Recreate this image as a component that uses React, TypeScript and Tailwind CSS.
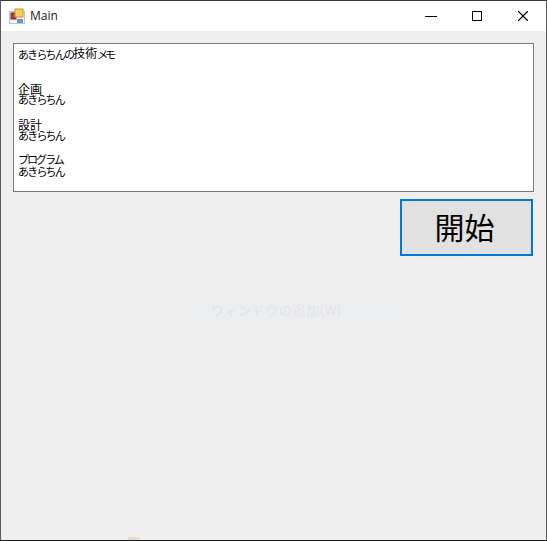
import { X } from 'lucide-react';

type Seg = { text: string; className: string };

const kana = 'text-[11px] tracking-[-1.8px]';
const kanji = 'text-xs tracking-normal align-[1px]';
const narrow = 'text-[11px] tracking-[-3.2px]';

const signature: Seg[] = [{ text: 'あきらちん', className: kana }];

const memoLines: Seg[][] = [
  [
    { text: 'あきらちんの', className: kana },
    { text: '技術', className: kanji },
    { text: 'メモ', className: narrow },
  ],
  [],
  [],
  [{ text: '企画', className: kanji }],
  signature,
  [],
  [{ text: '設計', className: kanji }],
  signature,
  [],
  [{ text: 'プログラム', className: 'text-[11px] tracking-[-2px]' }],
  signature,
];

function AppIcon() {
  return (
    <svg width="16" height="16" viewBox="0 0 16 16" className="shrink-0">
      <rect x="0.5" y="3.5" width="15" height="12" fill="#f4f4f4" stroke="#c4c4c4" />
      <rect x="2" y="5" width="5" height="6" fill="#b23a3a" stroke="#7a2a2a" />
      <rect x="6" y="1" width="8" height="8" fill="#f6cf57" stroke="#c89a2c" />
      <rect x="8" y="11" width="6" height="4" fill="#6d93c9" />
    </svg>
  );
}

export default function App() {
  return (
    <div className="relative w-[547px] h-[541px] overflow-hidden flex flex-col bg-[#efefef] border border-t-[#3a3a3a] border-x-[#5a5a5a] border-b-[#1a1a1a] font-['Noto_Sans_CJK_JP','Liberation_Sans',sans-serif] text-black">
      {/* title bar */}
      <div className="h-[30px] bg-white flex items-center shrink-0">
        <div className="pl-[8px] pr-[5px] flex items-center">
          <AppIcon />
        </div>
        <span className="text-xs text-[#222] font-['Open_Sans',sans-serif]">Main</span>
        <div className="ml-auto flex items-center text-black">
          <div className="w-[46px] flex justify-center">
            <div className="w-[12px] h-px bg-black" />
          </div>
          <div className="w-[46px] flex justify-center">
            <div className="w-[10px] h-[10px] border border-black" />
          </div>
          <div className="w-[46px] flex justify-center">
            <X size={18} strokeWidth={1.1} absoluteStrokeWidth />
          </div>
        </div>
      </div>

      <div className="flex flex-col pl-3 pr-[12px] pt-3">
        {/* memo box */}
        <div className="h-[149px] bg-white border border-[#7a7a7a] px-[4px] pt-px text-[11px] leading-[12px]">
          {memoLines.map((line, i) => (
            <div key={i} className="h-[12px] whitespace-pre">
              {line.map((seg, j) => (
                <span key={j} className={seg.className}>
                  {seg.text}
                </span>
              ))}
            </div>
          ))}
        </div>
        <div className="flex justify-end pt-[7px] pr-[1px]">
          <button className="w-[133px] h-[57px] border-2 border-[#0078d7] bg-[#e1e1e1] text-[30px] leading-none pb-1 pr-1">
            開始
          </button>
        </div>
      </div>

      {/* faint ghost of a menu behind the window */}
      <div className="absolute left-[180px] top-[299px] w-[219px] h-[20px] bg-[#edeef0] flex items-center pl-[30px] text-[13px] tracking-[0.6px] text-[#e3e4e6]">
        ウィンドウの追加(W)
      </div>
      <div className="absolute left-[127px] bottom-0 w-[12px] h-[3px] bg-[#e6ddc8]" />
    </div>
  );
}
